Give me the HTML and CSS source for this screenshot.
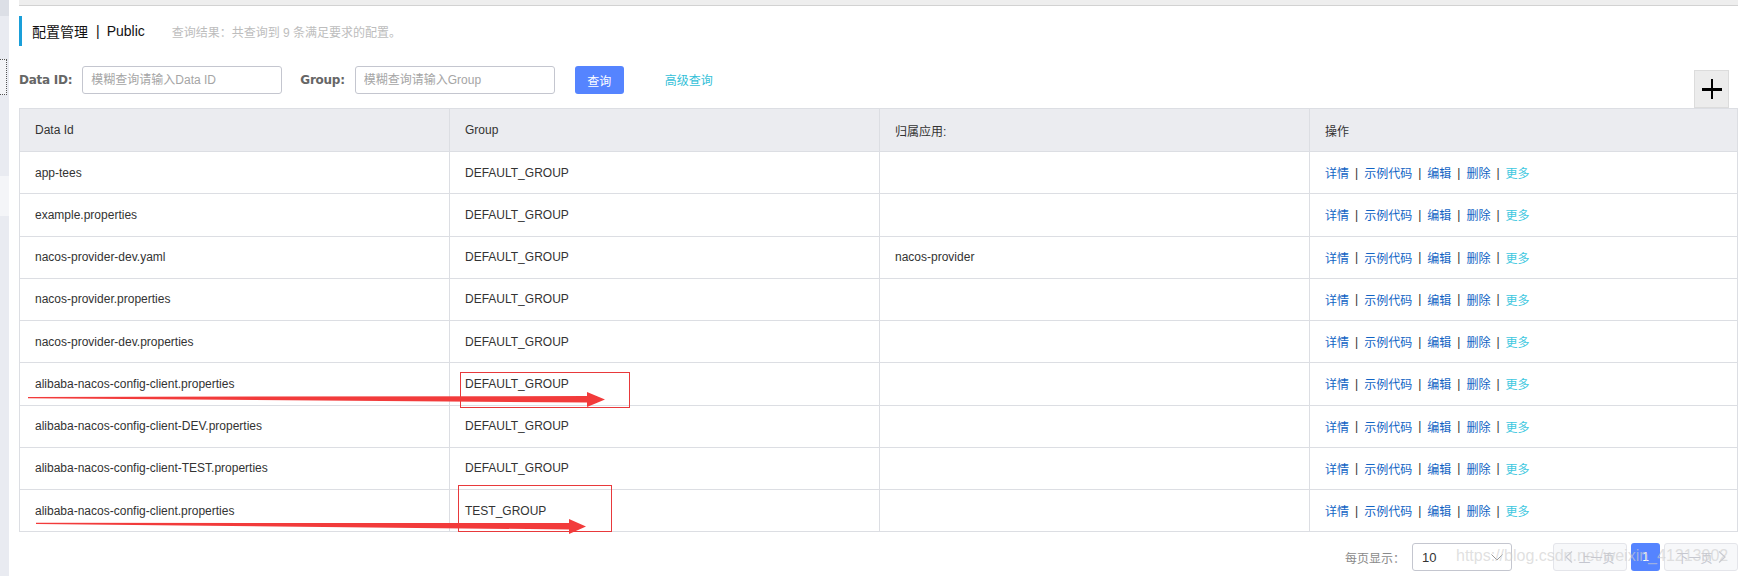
FILE: index.html
```html
<!DOCTYPE html>
<html lang="zh-CN">
<head>
<meta charset="utf-8">
<title>配置管理</title>
<link rel="stylesheet" href="styles.css">
</head>
<body>
<div class="page">
  <aside class="sidebar">
    <div class="sb-top"></div>
    <div class="sb-focus"></div>
    <div class="sb-item"></div>
  </aside>
  <main class="content">
    <div class="topbar"></div>
    <div class="title-row">
      <span class="title">配置管理</span><span class="title-sep">|</span><span class="title">Public</span>
      <span class="summary">查询结果：共查询到 9 条满足要求的配置。</span>
    </div>
    <div class="search-row">
      <label class="lbl">Data ID:</label>
      <input class="inp" type="text" placeholder="模糊查询请输入Data ID">
      <label class="lbl lbl-group">Group:</label>
      <input class="inp" type="text" placeholder="模糊查询请输入Group">
      <button class="btn-primary">查询</button>
      <a class="adv">高级查询</a>
      <button class="btn-add" aria-label="add">
        <svg width="20" height="20" viewBox="0 0 20 20"><rect x="0" y="9" width="20" height="3" fill="#000"/><rect x="9" y="0" width="2" height="20" fill="#000"/></svg>
      </button>
    </div>
    <div class="table">
      <div class="tr thead"><div class="td">Data Id</div><div class="td">Group</div><div class="td">归属应用:</div><div class="td">操作</div></div>
      <div class="tr"><div class="td">app-tees</div><div class="td">DEFAULT_GROUP</div><div class="td"></div><div class="td ops"><a>详情</a><i>|</i><a>示例代码</a><i>|</i><a>编辑</a><i>|</i><a>删除</a><i>|</i><a class="more">更多</a></div></div>
      <div class="tr"><div class="td">example.properties</div><div class="td">DEFAULT_GROUP</div><div class="td"></div><div class="td ops"><a>详情</a><i>|</i><a>示例代码</a><i>|</i><a>编辑</a><i>|</i><a>删除</a><i>|</i><a class="more">更多</a></div></div>
      <div class="tr"><div class="td">nacos-provider-dev.yaml</div><div class="td">DEFAULT_GROUP</div><div class="td">nacos-provider</div><div class="td ops"><a>详情</a><i>|</i><a>示例代码</a><i>|</i><a>编辑</a><i>|</i><a>删除</a><i>|</i><a class="more">更多</a></div></div>
      <div class="tr"><div class="td">nacos-provider.properties</div><div class="td">DEFAULT_GROUP</div><div class="td"></div><div class="td ops"><a>详情</a><i>|</i><a>示例代码</a><i>|</i><a>编辑</a><i>|</i><a>删除</a><i>|</i><a class="more">更多</a></div></div>
      <div class="tr"><div class="td">nacos-provider-dev.properties</div><div class="td">DEFAULT_GROUP</div><div class="td"></div><div class="td ops"><a>详情</a><i>|</i><a>示例代码</a><i>|</i><a>编辑</a><i>|</i><a>删除</a><i>|</i><a class="more">更多</a></div></div>
      <div class="tr"><div class="td">alibaba-nacos-config-client.properties</div><div class="td">DEFAULT_GROUP</div><div class="td"></div><div class="td ops"><a>详情</a><i>|</i><a>示例代码</a><i>|</i><a>编辑</a><i>|</i><a>删除</a><i>|</i><a class="more">更多</a></div></div>
      <div class="tr"><div class="td">alibaba-nacos-config-client-DEV.properties</div><div class="td">DEFAULT_GROUP</div><div class="td"></div><div class="td ops"><a>详情</a><i>|</i><a>示例代码</a><i>|</i><a>编辑</a><i>|</i><a>删除</a><i>|</i><a class="more">更多</a></div></div>
      <div class="tr"><div class="td">alibaba-nacos-config-client-TEST.properties</div><div class="td">DEFAULT_GROUP</div><div class="td"></div><div class="td ops"><a>详情</a><i>|</i><a>示例代码</a><i>|</i><a>编辑</a><i>|</i><a>删除</a><i>|</i><a class="more">更多</a></div></div>
      <div class="tr"><div class="td">alibaba-nacos-config-client.properties</div><div class="td">TEST_GROUP</div><div class="td"></div><div class="td ops"><a>详情</a><i>|</i><a>示例代码</a><i>|</i><a>编辑</a><i>|</i><a>删除</a><i>|</i><a class="more">更多</a></div></div>
    </div>
    <div class="pager">
      <span class="pg-label">每页显示：</span>
      <div class="pg-select"><span>10</span><svg width="12" height="7" viewBox="0 0 12 7"><path d="M0.5 0.5 L6 6 L11.5 0.5" fill="none" stroke="#999" stroke-width="1"/></svg></div>
      <button class="pg-btn pg-prev"><svg width="8" height="12" viewBox="0 0 8 12"><path d="M7 0.5 L1 6 L7 11.5" fill="none" stroke="#c8cad2" stroke-width="1.2"/></svg>上一页</button>
      <button class="pg-num">1</button>
      <button class="pg-btn pg-next">下一页<svg width="8" height="12" viewBox="0 0 8 12"><path d="M1 0.5 L7 6 L1 11.5" fill="none" stroke="#c8cad2" stroke-width="1.2"/></svg></button>
    </div>
  </main>
  <span class="watermark">https://blog.csdn.net/weixin_41213902</span>
  <svg class="marks" width="1738" height="576" viewBox="0 0 1738 576">
    <rect x="460.5" y="372.5" width="169" height="35" fill="none" stroke="#e8393b" stroke-width="1"/>
    <rect x="458.5" y="485.5" width="153" height="46" fill="none" stroke="#e8393b" stroke-width="1"/>
    <polygon points="28,397 587,396 587,392 605,399.5 587,407 587,402.5 28,398.2" fill="#f23b3b"/>
    <polygon points="36,522.8 569,523 569,519 586,526.5 569,534 569,529.5 36,524" fill="#f23b3b"/>
  </svg>
</div>
</body>
</html>
```
FILE: styles.css
```css
html, body {
  margin: 0;
  padding: 0;
  overflow: hidden;
  background: #fff;
}
body {
  font-family: "Liberation Sans", "Noto Sans CJK SC", sans-serif;
  font-size: 12px;
  color: #333;
}
.page {
  position: relative;
  display: flex;
  width: 1738px;
  height: 576px;
}
.sidebar {
  width: 9px;
  flex: none;
  background: #e9ebf1;
  display: flex;
  flex-direction: column;
}
.sb-top {
  height: 16px;
  background: #dcdfe6;
}
.sb-focus {
  margin-top: 43px;
  width: 7px;
  height: 36px;
  box-sizing: border-box;
  border: 1px dotted #555;
  border-left: none;
  background: #f3f4f7;
}
.sb-item {
  margin-top: 81px;
  height: 40px;
  background: #f4f5f8;
}
.content {
  margin-left: 10px;
  width: 1719px;
  flex: none;
}
.topbar {
  height: 5px;
  background: #eeeeee;
  border-bottom: 1px solid #d2d2d2;
}
.title-row {
  margin-top: 10px;
  height: 30px;
  border-left: 3px solid #1a9fd9;
  padding-left: 10px;
  display: flex;
  align-items: center;
}
.title {
  font-size: 14px;
  color: #111;
}
.title-sep {
  font-size: 14px;
  color: #111;
  margin: 0 7px 0 8px;
}
.summary {
  margin-left: 27px;
  color: #bdbdbd;
  font-size: 12px;
}
.search-row {
  margin-top: 20px;
  height: 42px;
  display: flex;
  align-items: flex-start;
}
.lbl {
  font-family: "DejaVu Sans", sans-serif;
  font-weight: bold;
  font-size: 12px;
  letter-spacing: -0.25px;
  color: #666;
  line-height: 28px;
  margin-right: 10px;
}
.lbl-group {
  margin-left: 18px;
}
.inp {
  width: 200px;
  height: 28px;
  box-sizing: border-box;
  border: 1px solid #c4c6cf;
  border-radius: 3px;
  padding: 0 8px;
  font-family: "Liberation Sans", "Noto Sans CJK SC", sans-serif;
  font-size: 12px;
  color: #333;
  outline: none;
  margin: 0;
}
.inp::placeholder {
  color: #a5a5a5;
}
.btn-primary {
  margin-left: 20px;
  width: 49px;
  height: 28px;
  border: none;
  border-radius: 3px;
  background: #5584ff;
  color: #fff;
  font-family: "Noto Sans CJK SC", sans-serif;
  font-size: 12px;
  padding: 0;
}
.adv {
  margin-left: 41px;
  line-height: 28px;
  color: #33bfd8;
  font-family: "Noto Sans CJK SC", sans-serif;
  font-size: 12px;
}
.btn-add {
  margin-left: auto;
  margin-right: 9px;
  margin-top: 4px;
  width: 35px;
  height: 38px;
  box-sizing: border-box;
  background: #ececec;
  border: 1px solid #dcdcdc;
  padding: 0;
  display: flex;
  align-items: center;
  justify-content: center;
}
.btn-add svg {
  display: block;
}
.table {
  border-top: 1px solid #dcdee3;
  border-left: 1px solid #dcdee3;
  width: 1719px;
  box-sizing: border-box;
}
.tr {
  display: grid;
  grid-template-columns: 430px 430px 430px 1fr;
  height: 42.25px;
  box-sizing: border-box;
  border-bottom: 1px solid #dcdee3;
}
.thead {
  height: 43px;
  background: #ebecf0;
}
.td {
  border-right: 1px solid #dcdee3;
  padding: 0 15px;
  display: flex;
  align-items: center;
  white-space: nowrap;
  color: #333;
}
.ops a {
  color: #1264c4;
  font-family: "Noto Sans CJK SC", sans-serif;
}
.ops a.more {
  color: #3ec8e0;
}
.ops i {
  font-style: normal;
  color: #333;
  margin: 0 6px 0 6px;
}
.pager {
  margin-top: 11px;
  display: flex;
  justify-content: flex-end;
  align-items: center;
  height: 28px;
}
.pg-label {
  color: #8a8a8a;
  font-family: "Noto Sans CJK SC", sans-serif;
  margin-right: 7px;
}
.pg-select {
  width: 100px;
  height: 28px;
  box-sizing: border-box;
  border: 1px solid #c4c6cf;
  border-radius: 3px;
  display: flex;
  align-items: center;
  justify-content: space-between;
  padding: 0 8px 0 9px;
  font-size: 13px;
  color: #333;
  margin-right: 41px;
}
.pg-btn {
  width: 74px;
  height: 28px;
  box-sizing: border-box;
  border: 1px solid #e4e5ea;
  border-radius: 3px;
  background: #f7f8fa;
  color: #c4c6cf;
  font-family: "Noto Sans CJK SC", sans-serif;
  font-size: 12px;
  padding: 0;
  display: flex;
  align-items: center;
  justify-content: center;
  gap: 5px;
}
.pg-num {
  width: 29px;
  height: 28px;
  margin: 0 4px;
  border: none;
  border-radius: 3px;
  background: #5584ff;
  color: #fff;
  font-family: "Liberation Sans", sans-serif;
  font-size: 12px;
  padding: 0;
}
.watermark {
  position: absolute;
  left: 1456px;
  top: 547px;
  font-family: "Liberation Sans", sans-serif;
  font-size: 16px;
  color: rgba(205, 205, 205, 0.62);
  white-space: nowrap;
  pointer-events: none;
}
.marks {
  position: absolute;
  left: 0;
  top: 0;
  pointer-events: none;
}
```
